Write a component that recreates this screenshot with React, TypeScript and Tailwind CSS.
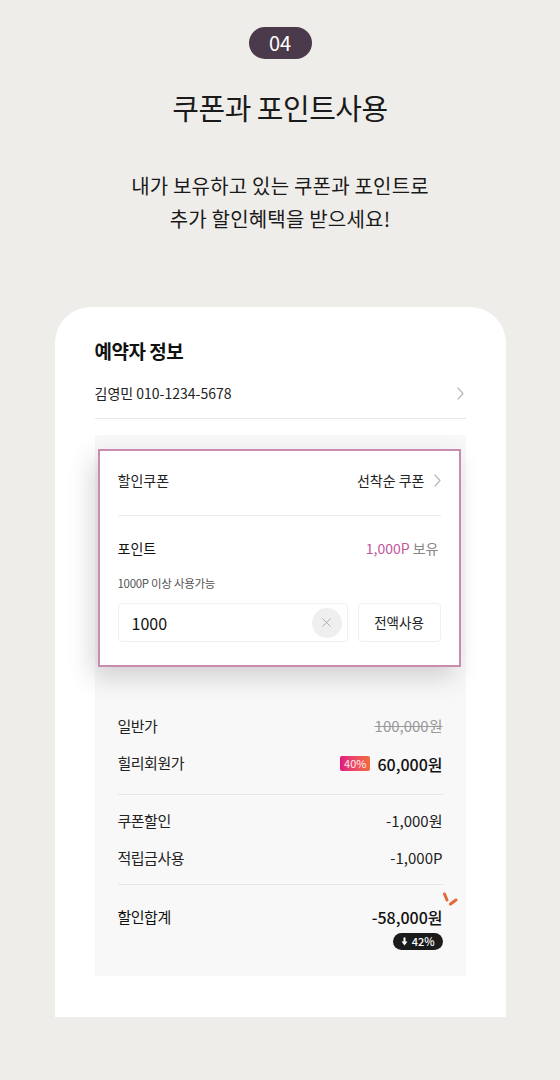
import { X } from "lucide-react";

const font = { fontFamily: '"Noto Sans CJK KR", "Noto Sans", sans-serif' };

type PriceRow = {
  label: string;
  value: string;
  strike?: boolean;
  badge?: string;
};

const memberRows: PriceRow[] = [
  { label: "일반가", value: "100,000원", strike: true },
  { label: "힐리회원가", value: "60,000원", badge: "40%" },
];

const discountRows: PriceRow[] = [
  { label: "쿠폰할인", value: "-1,000원" },
  { label: "적립금사용", value: "-1,000P" },
];

function Chevron({ className }: { className?: string }) {
  return (
    <svg width="7" height="13" viewBox="0 0 7 13" fill="none" className={className}>
      <path d="M1 1l5 5.5L1 12" stroke="currentColor" strokeWidth="1.2" strokeLinecap="round" strokeLinejoin="round" />
    </svg>
  );
}

function Row({ row }: { row: PriceRow }) {
  return (
    <div className="flex h-[37px] items-center justify-between">
      <span className="text-[15px] tracking-[-0.5px] text-[#222]">{row.label}</span>
      <div className="flex items-center gap-[7px]">
        {row.badge ? (
          <span className="flex h-[15px] items-center rounded-[2px] bg-gradient-to-r from-[#e2137f] to-[#f26a3a] px-[4px] text-[11px] leading-none text-white/90">
            {row.badge}
          </span>
        ) : null}
        <span
          className={
            row.strike
              ? "text-[15px] text-[#9a9a9a] line-through decoration-[#9a9a9a]"
              : row.badge
                ? "text-[16px] font-medium text-[#111]"
                : "text-[15px] text-[#222]"
          }
        >
          {row.value}
        </span>
      </div>
    </div>
  );
}

export default function App() {
  return (
    <div className="min-h-[1080px] w-[560px] bg-[#efedea] pt-[27px]" style={font}>
      <div className="flex flex-col items-center">
        <div className="flex h-[32px] w-[63px] items-center justify-center rounded-full bg-[#4b3a4b] text-[20px] leading-none text-white">
          04
        </div>
        <h1 className="mt-[28px] text-[29px] leading-[40px] tracking-[-0.5px] text-[#1a1a1a]">
          쿠폰과 포인트사용
        </h1>
        <p className="mt-[42px] text-center text-[20px] leading-[33px] tracking-[0.2px] text-[#1a1a1a]">
          내가 보유하고 있는 쿠폰과 포인트로
          <br />
          추가 할인혜택을 받으세요!
        </p>
      </div>

      <div className="mx-auto mt-[72px] w-[451px] rounded-t-[36px] bg-white px-[40px] pb-[41px] pt-[30px]">
        <h2 className="text-[19px] font-bold leading-[28px] tracking-[-0.5px] text-[#111]">예약자 정보</h2>
        <div className="mt-[14px] flex h-[28px] items-center justify-between">
          <span className="text-[14px] text-[#222]">김영민 010-1234-5678</span>
          <Chevron className="mr-[2px] text-[#b8b8b8]" />
        </div>
        <div className="mt-[11px] border-t border-[#e8e8e8]" />

        <div className="mt-[16px] bg-[#f8f8f8] pt-[14px]">
          <div className="ml-[3px] mr-[5px] border-2 border-[#c98bb0] bg-white px-[18px] shadow-[-6px_10px_24px_rgba(0,0,0,0.16)]">
            <div className="flex h-[65px] items-start justify-between border-b border-[#ececec] pt-[19px]">
              <span className="text-[14px] leading-[20px] text-[#222]">할인쿠폰</span>
              <div className="flex h-[20px] items-center gap-[9px]">
                <span className="text-[14px] leading-[20px] text-[#222]">선착순 쿠폰</span>
                <Chevron className="text-[#b8b8b8]" />
              </div>
            </div>
            <div className="mt-[22px] flex h-[20px] items-center justify-between pr-[2px]">
              <span className="text-[14px] text-[#111]">포인트</span>
              <span className="text-[14px]">
                <span className="text-[#c4569a]">1,000P</span>
                <span className="text-[#888]"> 보유</span>
              </span>
            </div>
            <p className="mt-[17px] text-[11.5px] leading-[16px] tracking-[-0.3px] text-[#555]">1000P 이상 사용가능</p>
            <div className="mt-[12px] flex gap-[10px] pb-[23px]">
              <div className="flex h-[39px] flex-1 items-center justify-between rounded-[4px] border border-[#f0f0f0] pl-[13px] pr-[5px]">
                <span className="text-[16px] text-[#111]">1000</span>
                <span className="flex h-[30px] w-[30px] items-center justify-center rounded-full bg-[#efefef]">
                  <X size={15} strokeWidth={1.4} className="text-[#a5a5a5]" />
                </span>
              </div>
              <div className="flex h-[39px] w-[83px] items-center justify-center rounded-[4px] border border-[#f0f0f0] text-[13.5px] text-[#222]">
                전액사용
              </div>
            </div>
          </div>

          <div className="px-[23px] pb-[26px] pt-[41px]">
            {memberRows.map((row) => (
              <Row key={row.label} row={row} />
            ))}
            <div className="mt-[12px] border-t border-[#e6e6e6]" />
            <div className="pt-[8px]">
              {discountRows.map((row) => (
                <Row key={row.label} row={row} />
              ))}
            </div>
            <div className="mt-[7px] border-t border-[#e6e6e6]" />
            <div className="mt-[21px] flex h-[22px] items-center justify-between">
              <span className="text-[15px] tracking-[-0.5px] text-[#111]">할인합계</span>
              <span className="relative text-[16px] font-medium leading-[22px] text-[#111]">
                -58,000원
                <svg width="17" height="15" viewBox="0 0 17 15" className="absolute -right-[15px] -top-[14px]">
                  <path d="M3.5 2l2.5 6" stroke="#e5683b" strokeWidth="3" strokeLinecap="round" />
                  <path d="M9.5 12l5.5-4" stroke="#e5683b" strokeWidth="3" strokeLinecap="round" />
                </svg>
              </span>
            </div>
            <div className="mt-[5px] flex justify-end">
              <span className="flex h-[17px] items-center gap-[4px] rounded-full bg-[#1b1b1b] px-[8px] text-[11px] font-medium leading-none text-white">
                <svg width="7" height="9" viewBox="0 0 7 9">
                  <path d="M2.5 0.5h2v4h2L3.5 8.5 0.5 4.5h2z" fill="white" />
                </svg>
                42%
              </span>
            </div>
          </div>
        </div>
      </div>
    </div>
  );
}
